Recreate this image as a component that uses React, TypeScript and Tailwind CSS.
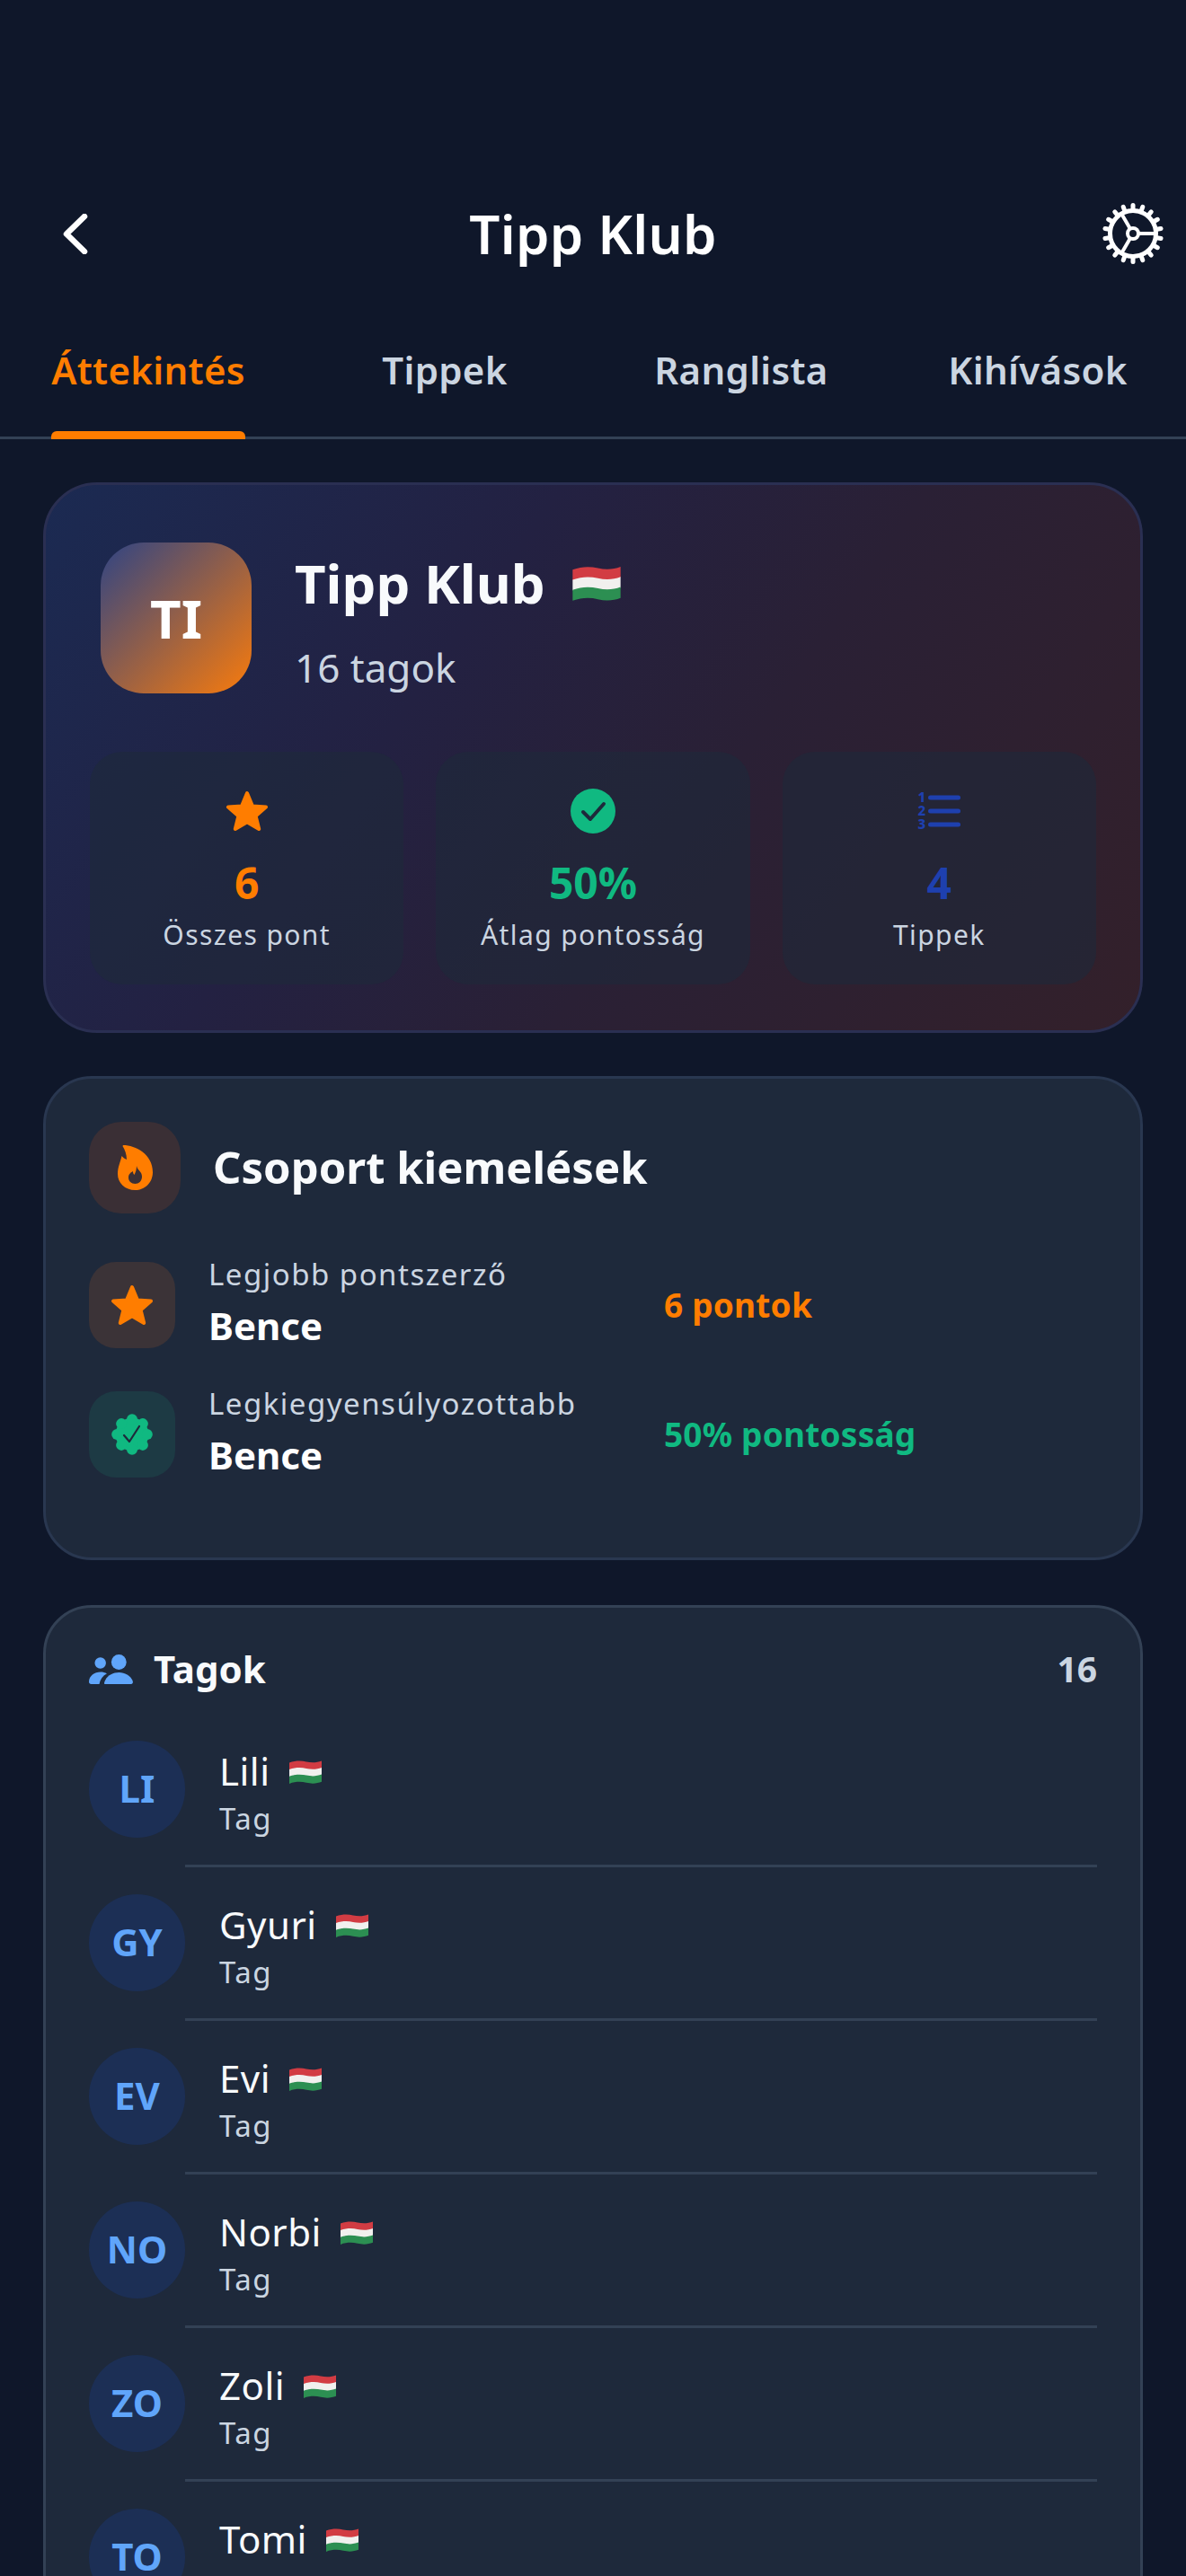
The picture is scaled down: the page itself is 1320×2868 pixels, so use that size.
const members = [
  { initials: "LI", name: "Lili" },
  { initials: "GY", name: "Gyuri" },
  { initials: "EV", name: "Evi" },
  { initials: "NO", name: "Norbi" },
  { initials: "ZO", name: "Zoli" },
  { initials: "TO", name: "Tomi" },
];

const band = "M0 3.5C7 1 13 1 19 2.4C25 3.8 31 3.4 36 1.4V9.6C31 11.6 25 12 19 10.6C13 9.2 7 9.2 0 11.7Z";

const Flag = ({ className }: { className: string }) => (
  <svg viewBox="0 0 36 27" className={className}>
    <path d={band} fill="#d23c43" />
    <path d={band} fill="#f1f0ee" transform="translate(0 7.6)" />
    <path d={band} fill="#2c8f52" transform="translate(0 15.2)" />
  </svg>
);

const Star = ({ className }: { className: string }) => (
  <svg viewBox="0 0 48 46" className={className}>
    <path
      d="M24 3L30 17.5L45 18.6L33.6 28.4L37.2 43L24 35.2L10.8 43L14.4 28.4L3 18.6L18 17.5Z"
      fill="#ff7d00"
      stroke="#ff7d00"
      strokeWidth="4"
      strokeLinejoin="round"
    />
  </svg>
);

const Flame = () => (
  <svg viewBox="0 0 39 50" className="w-[39px] h-[50px]">
    <path
      fillRule="evenodd"
      fill="#ff7d00"
      d="M6 0C20 0 39 10 39 30C39 42 30 50 19.5 50C8 50 0 42 0 32C0 24 3 19 4.5 12C6 14 8 15 10 16C10 10 8 5 5.5 1ZM21 23C22 28 27 29 27 35C27 40 23.5 43 19.5 43C15 43 12 40 12 36C12 32 15 30 17 29C17 31 17.5 32 18.5 33C20 30 21 27 21 23Z"
    />
  </svg>
);

const lobes = [0, 45, 90, 135, 180, 225, 270, 315];

const Badge = () => (
  <svg viewBox="-23 -23 46 46" className="w-[46px] h-[46px]">
    <circle r="18.5" fill="#10b981" />
    {lobes.map((a) => (
      <circle
        key={a}
        cx={16.8 * Math.cos(((a + 90) * Math.PI) / 180)}
        cy={16.8 * Math.sin(((a + 90) * Math.PI) / 180)}
        r="6"
        fill="#10b981"
      />
    ))}
    <path d="M-9 1L-3 8L8 -9" fill="none" stroke="#1e293b" strokeWidth="2.2" strokeLinecap="round" strokeLinejoin="round" />
  </svg>
);

const People = () => (
  <svg viewBox="0 0 49 33" className="w-[49px] h-[33px]">
    <g fill="#60a5fa">
      <circle cx="12.7" cy="9.5" r="6.2" />
      <circle cx="33.3" cy="8.5" r="8.4" />
      <path d="M0 30.5C0 24 6 19.5 13 19.5C15.5 19.5 18 20 20 21.2C15.5 23.5 12.5 27.5 11.5 33H2.5C1 33 0 32 0 30.5Z" />
      <path d="M18 33C16 33 17.5 30 18.5 28C21 23 27 20 33.5 20C40 20 46 23.5 48.5 29C49.5 31.5 48.5 33 47 33Z" />
    </g>
  </svg>
);

const teeth = Array.from({ length: 18 }, (_, i) => 10 + i * 20);

const Gear = () => (
  <svg viewBox="-35 -35 70 70" className="size-[70px]">
    <g fill="none" stroke="#fff" strokeLinecap="round">
      <circle r="25.5" strokeWidth="5" />
      {teeth.map((a) => (
        <line
          key={a}
          x1={27 * Math.cos((a * Math.PI) / 180)}
          y1={27 * Math.sin((a * Math.PI) / 180)}
          x2={31.5 * Math.cos((a * Math.PI) / 180)}
          y2={31.5 * Math.sin((a * Math.PI) / 180)}
          strokeWidth="5"
        />
      ))}
      <path d="M7 0H25M-3.5 -6L-12.5 -21.6M-3.5 6L-12.5 21.6" strokeWidth="4" />
      <circle r="6" strokeWidth="4" />
    </g>
  </svg>
);

const NumberedList = () => (
  <svg viewBox="0 -5 48 52" className="w-[48px] h-[52px]" fill="#1e40af">
    <rect x="12" y="3.5" width="36" height="5" rx="2.5" />
    <rect x="12" y="18.5" width="36" height="5" rx="2.5" />
    <rect x="12" y="33.5" width="36" height="5" rx="2.5" />
    <g fontSize="15" fontWeight="800">
      <text x="0.5" y="11">1</text>
      <text x="0.5" y="26">2</text>
      <text x="0.5" y="41">3</text>
    </g>
  </svg>
);

const Stat = ({ icon, value, label, color }: { icon: React.ReactNode; value: string; label: string; color: string }) => (
  <div className="h-[259px] rounded-[36px] bg-[#1e293b]/60 flex flex-col items-center pt-[36px]">
    <div className="h-[60px] flex items-center justify-center">{icon}</div>
    <div className={`mt-[20px] text-[48px] leading-[60px] font-bold ${color}`}>{value}</div>
    <div className="mt-[7px] text-[30px] leading-[42px] tracking-[1.4px] text-[#cbd5e1]">{label}</div>
  </div>
);

const Highlight = ({
  box,
  icon,
  label,
  value,
  valueColor,
}: {
  box: string;
  icon: React.ReactNode;
  label: string;
  value: string;
  valueColor: string;
}) => (
  <div className="flex items-center">
    <div className={`size-24 rounded-[30px] flex items-center justify-center ${box}`}>{icon}</div>
    <div className="ml-[37px] w-[507px] h-24">
      <div className="-mt-[10px] text-[33px] leading-[48px] tracking-[1.5px] text-[#cbd5e1]">{label}</div>
      <div className="mt-[3px] text-[42px] leading-[60px] font-bold text-white">Bence</div>
    </div>
    <div className={`text-[37px] leading-[52px] tracking-[0.2px] font-bold ${valueColor}`}>{value}</div>
  </div>
);

export default function App() {
  return (
    <div className="w-[1320px] h-[2868px] overflow-hidden bg-[#0f172a] font-['Noto_Sans',sans-serif]">
      <header className="pt-[208px] pl-[70px] pr-[24px] flex items-center justify-between relative">
        <svg viewBox="0 0 28 45" className="w-[28px] h-[45px]">
          <path d="M24 3L4 22.5L24 42" fill="none" stroke="#fff" strokeWidth="6.5" strokeLinecap="round" strokeLinejoin="round" />
        </svg>
        <h1 className="h-[104px] text-[60px] leading-[104px] tracking-[0.2px] font-semibold text-white absolute left-0 right-0 text-center">
          Tipp Klub
        </h1>
        <div className="h-[104px] flex items-center">
          <Gear />
        </div>
      </header>
      <nav className="grid grid-cols-4 pt-[70px] border-b-[3px] border-[#334155]">
        {["Áttekintés", "Tippek", "Ranglista", "Kihívások"].map((t, i) => (
          <div key={t} className="flex justify-center">
            <div className="flex flex-col">
              <span className={`text-[42px] leading-[60px] tracking-[0.3px] font-semibold ${i === 0 ? "text-[#ff7d00]" : "text-[#cbd5e1]"}`}>{t}</span>
              <span className={`mt-[38px] h-[9px] -mb-[3px] rounded-t-[6px] ${i === 0 ? "bg-[#ff7d00]" : ""}`} />
            </div>
          </div>
        ))}
      </nav>

      <main className="px-12 pt-12">
        <section className="rounded-[60px] border-[3px] border-[#2a2f52] bg-[linear-gradient(125deg,#1b2a52,#232142_35%,#2a2035_60%,#33202a)] pt-[64px] pb-[51px] px-[61px]">
          <div className="flex">
            <div className="size-[168px] rounded-[48px] bg-[linear-gradient(135deg,#2f4484,#f97b0c)] flex items-center justify-center text-[60px] font-bold text-white">
              TI
            </div>
            <div className="ml-12">
              <div className="flex items-center">
                <span className="text-[60px] leading-[90px] font-bold text-[#f8fafc]">Tipp Klub</span>
                <Flag className="ml-[30px] w-[54px] h-[40px]" />
              </div>
              <div className="mt-[19px] text-[44px] leading-[60px] text-[#cbd5e1]">16 tagok</div>
            </div>
          </div>
          <div className="grid grid-cols-3 gap-9 -mx-[12px] mt-[64px]">
            <Stat icon={<Star className="w-[48px] h-[46px]" />} value="6" label="Összes pont" color="text-[#ff7d00]" />
            <Stat
              icon={
                <svg viewBox="0 0 50 50" className="w-[50px] h-[50px]">
                  <circle cx="25" cy="25" r="25" fill="#10b981" />
                  <path d="M14 26L22 34L37 17" fill="none" stroke="#1e293b" strokeWidth="4" strokeLinecap="round" strokeLinejoin="round" />
                </svg>
              }
              value="50%"
              label="Átlag pontosság"
              color="text-[#10b981]"
            />
            <Stat icon={<NumberedList />} value="4" label="Tippek" color="text-[#1e40af]" />
          </div>
        </section>

        <section className="mt-12 rounded-[54px] border-[3px] border-[#293750] bg-[#1e293b] pt-12 px-12 pb-[89px]">
          <div className="flex items-center">
            <div className="size-[102px] rounded-[36px] bg-[#3a2f35] flex items-center justify-center">
              <Flame />
            </div>
            <h2 className="ml-[36px] -mt-[2px] text-[49px] leading-[68px] font-bold text-[#f8fafc]">Csoport kiemelések</h2>
          </div>
          <div className="mt-[54px] flex flex-col gap-12">
            <Highlight
              box="bg-[#3b3337]"
              icon={<Star className="w-[48px] h-[46px]" />}
              label="Legjobb pontszerző"
              value="6 pontok"
              valueColor="text-[#ff7d00]"
            />
            <Highlight
              box="bg-[#1d3a44]"
              icon={<Badge />}
              label="Legkiegyensúlyozottabb"
              value="50% pontosság"
              valueColor="text-[#10b981]"
            />
          </div>
        </section>

        <section className="mt-[50px] rounded-[54px] border-[3px] border-[#334155] bg-[#1e293b] pt-[38px] px-12">
          <div className="flex items-center justify-between">
            <div className="flex items-center">
              <People />
              <span className="ml-[23px] text-[42px] leading-[60px] font-bold text-[#f8fafc]">Tagok</span>
            </div>
            <span className="text-[39px] font-bold text-[#cbd5e1]">16</span>
          </div>
          <div className="mt-[20px]">
            {members.map((m) => (
              <div key={m.name} className="flex">
                <div className="my-[30px] w-[107px] h-[108px] pb-[4px] rounded-full bg-[#1c2f55] flex items-center justify-center text-[42px] font-bold text-[#60a5fa]">
                  {m.initials}
                </div>
                <div className="flex-1 border-b-[3px] border-[#334155] pl-[38px] pt-[36px] h-[171px]">
                  <div className="flex items-center">
                    <span className="text-[42px] leading-[56px] tracking-[0.5px] text-[#f8fafc]">{m.name}</span>
                    <Flag className="ml-[21px] w-[36px] h-[27px]" />
                  </div>
                  <div className="mt-[2px] text-[33px] leading-[46px] tracking-[1.5px] text-[#cbd5e1]">Tag</div>
                </div>
              </div>
            ))}
          </div>
        </section>
      </main>
    </div>
  );
}
